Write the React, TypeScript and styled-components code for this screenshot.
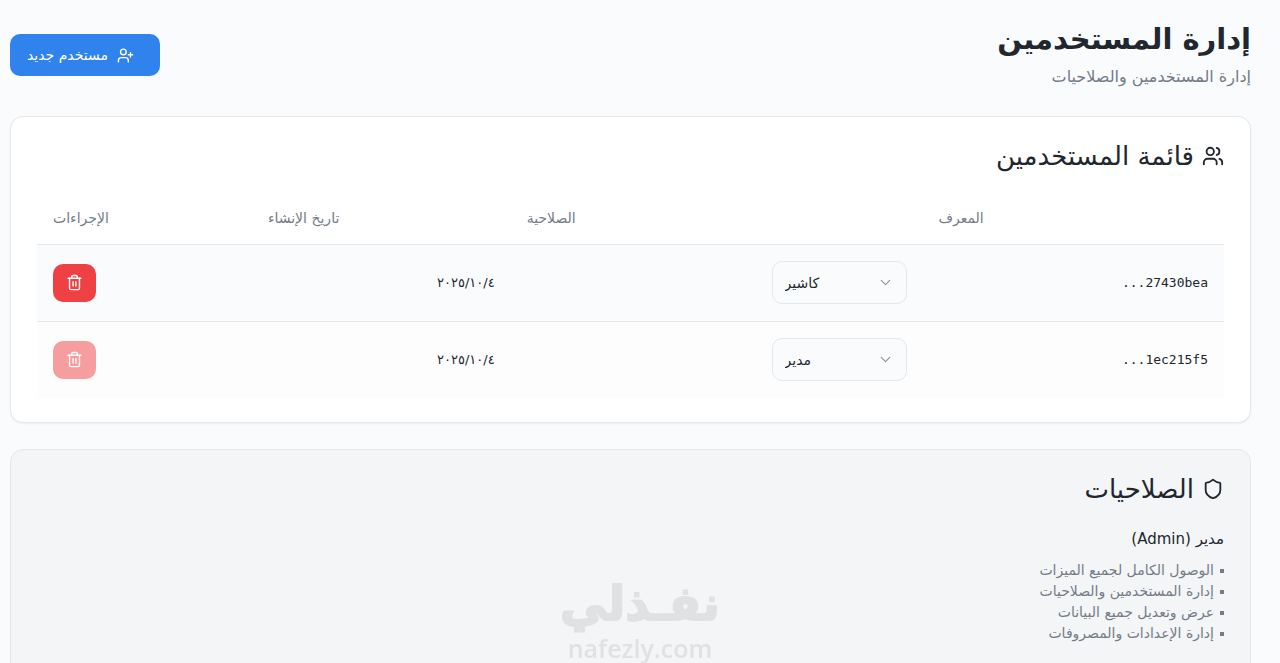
import React from "react";
import styled, { createGlobalStyle } from "styled-components";
import { ChevronDown, Shield, Trash2, UserPlus, Users } from "lucide-react";

const GlobalStyle = createGlobalStyle`
  *, *::before, *::after { box-sizing: border-box; }
  html { scrollbar-width: none; }
  body {
    margin: 0;
    background: #f9fbfd;
    color: #20272f;
    font-family: "DejaVu Sans", "Liberation Sans", sans-serif;
    font-size: 13px;
  }
`;

const Page = styled.main`
  display: flex;
  flex-direction: column;
  gap: 26px;
  padding: 20px 29px 24px 10px;
`;

const PageHeader = styled.header`
  display: flex;
  align-items: center;
  justify-content: space-between;
  height: 70px;
`;

const PageTitle = styled.h1`
  margin: 0;
  font-size: 29px;
  line-height: 44px;
  font-weight: 700;
`;

const Subtitle = styled.p`
  margin: 0;
  font-size: 16px;
  line-height: 32px;
  color: #737c87;
`;

const PrimaryButton = styled.button`
  display: flex;
  align-items: center;
  gap: 9px;
  height: 42px;
  padding: 0 26px 0 17px;
  border: 0;
  border-radius: 10px;
  background: #3082ed;
  color: #fff;
  font-family: inherit;
  font-size: 14px;
`;

const Card = styled.section<{ $muted?: boolean }>`
  padding: 20px 26px ${(p) => (p.$muted ? "48px" : "24px")};
  border: 1px solid #e4e8eb;
  border-radius: 13px;
  background: ${(p) => (p.$muted ? "#f4f5f7" : "#fff")};
  box-shadow: ${(p) => (p.$muted ? "none" : "0 1px 2px rgba(0, 0, 0, 0.06)")};
`;

const CardTitle = styled.h2`
  display: flex;
  align-items: center;
  gap: 8px;
  margin: 0;
  font-size: 26px;
  line-height: 38px;
  font-weight: 400;
`;

const Table = styled.table`
  width: 100%;
  margin-top: 16px;
  border-collapse: collapse;
  table-layout: fixed;
`;

const HeadCell = styled.th<{ $width: string }>`
  width: ${(p) => p.$width};
  height: 53px;
  padding: 2px 16px 0;
  text-align: left;
  font-size: 14px;
  font-weight: 400;
  color: #737c87;
`;

const Row = styled.tr<{ $striped: boolean }>`
  height: 77px;
  border-top: 1px solid #e4e8eb;
  background: ${(p) => (p.$striped ? "#f9fbfc" : "#fdfdfd")};
`;

const Cell = styled.td`
  padding: 0 16px;
  text-align: right;
`;

const UserId = styled(Cell)`
  font-family: "DejaVu Sans Mono", "Liberation Mono", monospace;
`;

const SelectBox = styled.div`
  position: relative;
  width: 135px;
  color: #20272f;

  svg {
    position: absolute;
    top: 13px;
    right: 13px;
    color: #8b9198;
    pointer-events: none;
  }
`;

const RoleSelect = styled.select`
  appearance: none;
  display: block;
  width: 100%;
  height: 43px;
  padding: 0 36px 0 12px;
  border: 1px solid #e4e8eb;
  border-radius: 10px;
  background: #f9fbfc;
  color: inherit;
  direction: ltr;
  font-family: inherit;
  font-size: 14px;
`;

const Actions = styled.div`
  display: flex;
  justify-content: flex-end;
`;

const DeleteButton = styled.button`
  display: flex;
  align-items: center;
  justify-content: center;
  width: 43px;
  height: 38px;
  padding: 0;
  border: 0;
  border-radius: 10px;
  background: #ef4043;
  color: #fff;

  &:disabled { opacity: 0.5; }
`;

const RoleName = styled.h3`
  margin: 18px 0 8px;
  font-size: 15px;
  line-height: 26px;
  font-weight: 400;
`;

const Permissions = styled.ul`
  margin: 0;
  padding: 0;
  list-style: none;
  font-size: 14px;
  line-height: 21px;
  color: #737c87;

  li {
    display: flex;
    align-items: center;
    gap: 6px;
  }

  li::before {
    content: "";
    width: 4px;
    height: 4px;
    background: currentColor;
  }
`;

const Watermark = styled.div`
  position: fixed;
  right: 0;
  bottom: 0;
  left: 0;
  display: flex;
  flex-direction: column;
  align-items: center;
  color: #dfe1e3;
  pointer-events: none;
`;

const WatermarkName = styled.span`
  font-size: 47px;
  line-height: 58px;
  font-weight: 700;
  -webkit-text-stroke: 2px #dfe1e3;
`;

const WatermarkSite = styled.span`
  font-family: "Open Sans", sans-serif;
  font-size: 25px;
  line-height: 30px;
  font-weight: 600;
`;

const columns = [
  { label: "المعرف", width: "25.4%" },
  { label: "الصلاحية", width: "34.7%" },
  { label: "تاريخ الإنشاء", width: "21.8%" },
  { label: "الإجراءات", width: "18.1%" },
];

const users = [
  { id: "27430bea", role: "كاشير", date: "٢٠٢٥/١٠/٤", removable: true },
  { id: "1ec215f5", role: "مدير", date: "٢٠٢٥/١٠/٤", removable: false },
];

const permissions = [
  "الوصول الكامل لجميع الميزات",
  "إدارة المستخدمين والصلاحيات",
  "عرض وتعديل جميع البيانات",
  "إدارة الإعدادات والمصروفات",
];

export default function App() {
  return (
    <Page dir="rtl" lang="ar">
      <GlobalStyle />
      <PageHeader>
        <div>
          <PageTitle>إدارة المستخدمين</PageTitle>
          <Subtitle>إدارة المستخدمين والصلاحيات</Subtitle>
        </div>
        <PrimaryButton type="button">
          <UserPlus size={17} />
          مستخدم جديد
        </PrimaryButton>
      </PageHeader>

      <Card>
        <CardTitle>
          <Users size={22} />
          قائمة المستخدمين
        </CardTitle>
        <Table>
          <thead>
            <tr>
              {columns.map((c) => (
                <HeadCell key={c.label} $width={c.width} scope="col">
                  {c.label}
                </HeadCell>
              ))}
            </tr>
          </thead>
          <tbody>
            {users.map((u) => (
              <Row key={u.id} $striped={u.removable}>
                <UserId>{u.id}...</UserId>
                <Cell>
                  <SelectBox>
                    <RoleSelect aria-label="الصلاحية" defaultValue={u.role}>
                      <option>مدير</option>
                      <option>كاشير</option>
                    </RoleSelect>
                    <ChevronDown size={17} strokeWidth={1.5} />
                  </SelectBox>
                </Cell>
                <Cell>{u.date}</Cell>
                <Cell>
                  <Actions>
                    <DeleteButton type="button" aria-label="حذف" disabled={!u.removable}>
                      <Trash2 size={17} />
                    </DeleteButton>
                  </Actions>
                </Cell>
              </Row>
            ))}
          </tbody>
        </Table>
      </Card>

      <Card $muted>
        <CardTitle>
          <Shield size={22} />
          الصلاحيات
        </CardTitle>
        <RoleName>مدير (Admin)</RoleName>
        <Permissions>
          {permissions.map((p) => (
            <li key={p}>{p}</li>
          ))}
        </Permissions>
      </Card>

      <Watermark aria-hidden="true">
        <WatermarkName>نفـذلي</WatermarkName>
        <WatermarkSite dir="ltr">nafezly.com</WatermarkSite>
      </Watermark>
    </Page>
  );
}
